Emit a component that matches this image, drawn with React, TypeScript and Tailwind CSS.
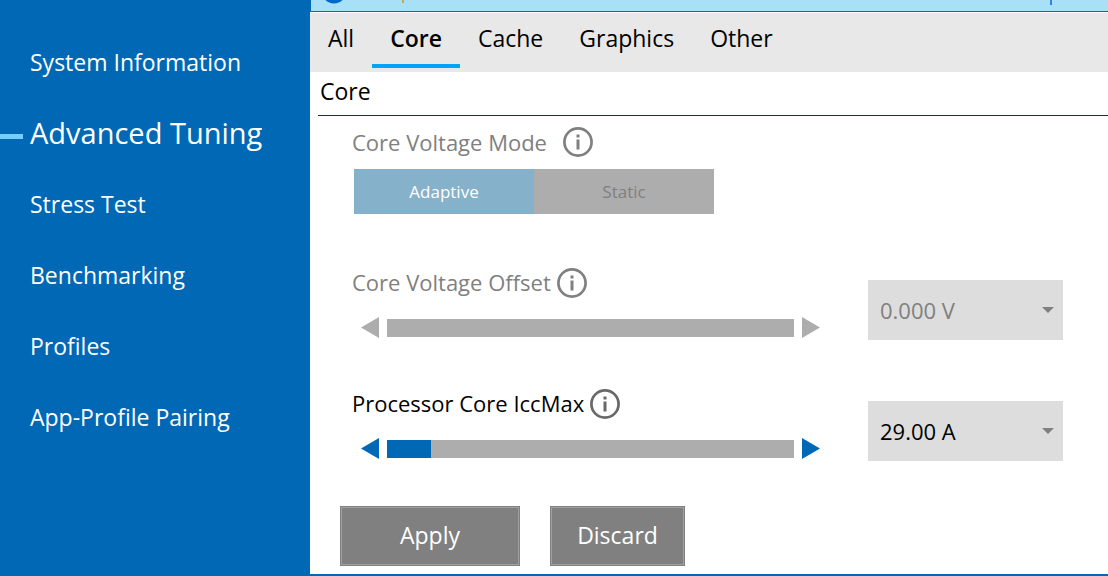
import React, { useState } from "react";

const navItems = [
  "System Information",
  "Advanced Tuning",
  "Stress Test",
  "Benchmarking",
  "Profiles",
  "App-Profile Pairing",
];

const tabs = ["All", "Core", "Cache", "Graphics", "Other"];

// Round "i" button that sits next to every setting name.
function InfoButton({ about, className }: { about: string; className: string }) {
  return (
    <button type="button" aria-label={`About ${about}`} className={className}>
      <svg viewBox="0 0 30 30" className="block size-[30px]" aria-hidden="true">
        <circle cx="15" cy="15" r="13.6" fill="none" stroke="currentColor" strokeWidth="2.7" />
        <rect x="13.5" y="7.5" width="3" height="3" fill="currentColor" />
        <rect x="13.5" y="12.5" width="3" height="10" fill="currentColor" />
      </svg>
    </button>
  );
}

// Triangle used as the step button at both ends of a slider.
function Arrow({ dir }: { dir: "left" | "right" }) {
  return (
    <svg viewBox="0 0 18 21" className="block h-[21px] w-[18px]" aria-hidden="true">
      <path d={dir === "left" ? "M18 0V21L0 10.5Z" : "M0 0V21L18 10.5Z"} fill="currentColor" />
    </svg>
  );
}

type SettingProps = {
  id: string;
  name: string;
  unit: string;
  digits: number;
  min: number;
  max: number;
  step: number;
  initial: number;
  disabled?: boolean;
};

// One tunable value: label, slider with step buttons, and a drop-down with the same value.
function SliderSetting({ id, name, unit, digits, min, max, step, initial, disabled }: SettingProps) {
  const [value, setValue] = useState(initial);
  const percent = disabled ? 0 : ((value - min) / (max - min)) * 100;
  const change = (next: number) => setValue(Math.min(max, Math.max(min, next)));
  const options = [value - step, value, value + step];
  const arrowColor = disabled ? "text-[#adadad]" : "text-[#0068b5]";

  return (
    <div className="flex items-start gap-12">
      <div className="min-w-0 max-w-[468px] flex-1">
        <div className="flex items-start gap-[6px]">
          <label htmlFor={id} className={disabled ? "leading-7 text-[#808080]" : "leading-7 text-black"}>
            {name}
          </label>
          <InfoButton about={name} className={disabled ? "text-[#808080]" : "text-[#696969]"} />
        </div>
        <div className="mt-[19px] flex items-center gap-2 pl-[9px]">
          <button type="button" aria-label={`Decrease ${name}`} disabled={disabled} onClick={() => change(value - step)} className={arrowColor}>
            <Arrow dir="left" />
          </button>
          <input
            id={id}
            type="range"
            min={min}
            max={max}
            step={step}
            value={value}
            disabled={disabled}
            onChange={(e) => change(Number(e.target.value))}
            style={{ backgroundSize: `${percent}% 100%` }}
            className="h-[18px] min-w-0 flex-1 appearance-none bg-[#adadad] bg-[linear-gradient(#0068b5,#0068b5)] bg-no-repeat [&::-webkit-slider-thumb]:opacity-0"
          />
          <button type="button" aria-label={`Increase ${name}`} disabled={disabled} onClick={() => change(value + step)} className={arrowColor}>
            <Arrow dir="right" />
          </button>
        </div>
      </div>
      <div className="relative mt-3 w-[195px] shrink-0">
        <select
          aria-label={`${name} value`}
          value={value}
          disabled={disabled}
          onChange={(e) => change(Number(e.target.value))}
          className={`h-[60px] w-full appearance-none bg-[#dddddd] px-3 opacity-100 ${disabled ? "text-[#808080]" : "text-black"}`}
        >
          {options.map((o) => (
            <option key={o} value={o}>
              {o.toFixed(digits)} {unit}
            </option>
          ))}
        </select>
        <svg viewBox="0 0 12 6" className="pointer-events-none absolute top-[27px] right-[9px] h-[6px] w-[12px] text-[#808080]" aria-hidden="true">
          <path d="M0 0H12L6 6Z" fill="currentColor" />
        </svg>
      </div>
    </div>
  );
}

export default function App() {
  const [page, setPage] = useState("Advanced Tuning");
  const [tab, setTab] = useState("Core");

  return (
    <div className="flex min-h-screen bg-white font-['Open_Sans','Noto_Sans',sans-serif] text-[23px] leading-[30px] text-black">
      {/* Main navigation */}
      <nav className="w-[310px] shrink-0 bg-[#0068b5] pt-[30px] text-white">
        {navItems.map((item) => (
          <a
            key={item}
            href="#"
            aria-current={item === page ? "page" : undefined}
            onClick={() => setPage(item)}
            className="flex h-[71px] items-center"
          >
            <span className={item === page ? "mr-[7px] h-[5px] w-[23px] bg-[#76ceff]" : "mr-[7px] w-[23px]"} />
            <span className={item === page ? "pb-2 text-[29px]" : "pb-2"}>{item}</span>
          </a>
        ))}
      </nav>

      <main className="flex min-w-0 flex-1 flex-col border-b-2 border-[#0068b5]">
        {/* Lower edge of the banner */}
        <div className="flex h-3 justify-between border-b border-l border-[#0068b5] bg-[#a8e0f7] pr-14">
          <svg viewBox="0 0 110 11" className="block h-[11px] w-[110px]" aria-hidden="true">
            <circle cx="23" cy="-9" r="12.5" fill="#0068c8" />
            <rect x="91" y="0" width="2" height="3" fill="#c8a850" />
          </svg>
          <span className="h-[5px] w-[2px] bg-[#2f86d6]" />
        </div>

        {/* Category tabs */}
        <div role="tablist" className="mt-px flex h-[59px] bg-[#e8e8e8]">
          {tabs.map((name) => (
            <button
              key={name}
              type="button"
              role="tab"
              aria-selected={name === tab}
              onClick={() => setTab(name)}
              className={
                name === tab
                  ? "mb-1 border-b-4 border-[#00a3f6] px-[18px] pb-[2px] font-semibold"
                  : "mb-1 border-b-4 border-transparent px-[18px] pb-[2px]"
              }
            >
              {name}
            </button>
          ))}
        </div>

        <h1 className="ml-2 h-11 border-b border-[#003468] pt-1 pl-[2px]">{tab}</h1>

        <div className="pr-[45px] pl-[42px] text-[22px]">
          <div className="mt-[11px] flex items-center gap-4 text-[#808080]">
            <span id="mode">Core Voltage Mode</span>
            <InfoButton about="Core Voltage Mode" className="text-[#808080]" />
          </div>
          <div role="group" aria-labelledby="mode" className="mt-3 ml-[2px] grid h-[45px] max-w-[360px] grid-cols-2 text-[17px]">
            <button type="button" disabled aria-pressed="true" className="bg-[#86b1ca] text-white">
              Adaptive
            </button>
            <button type="button" disabled aria-pressed="false" className="bg-[#adadad] text-[#808080]">
              Static
            </button>
          </div>

          <div className="mt-[54px] flex flex-col gap-[49px]">
            <SliderSetting id="offset" name="Core Voltage Offset" unit="V" digits={3} min={-1} max={1} step={0.001} initial={0} disabled />
            <SliderSetting id="iccmax" name="Processor Core IccMax" unit="A" digits={2} min={1} max={260} step={1} initial={29} />
          </div>
        </div>

        <div className="mt-[45px] mb-2 ml-[30px] flex gap-[30px] text-white">
          <button type="button" className="h-[60px] w-[180px] border border-[#808080] bg-[#808080] pb-[2px] inset-ring inset-ring-[#a0a0a0]">
            Apply
          </button>
          <button type="button" className="h-[60px] w-[135px] border border-[#808080] bg-[#808080] pb-[2px] inset-ring inset-ring-[#a0a0a0]">
            Discard
          </button>
        </div>
      </main>
    </div>
  );
}
